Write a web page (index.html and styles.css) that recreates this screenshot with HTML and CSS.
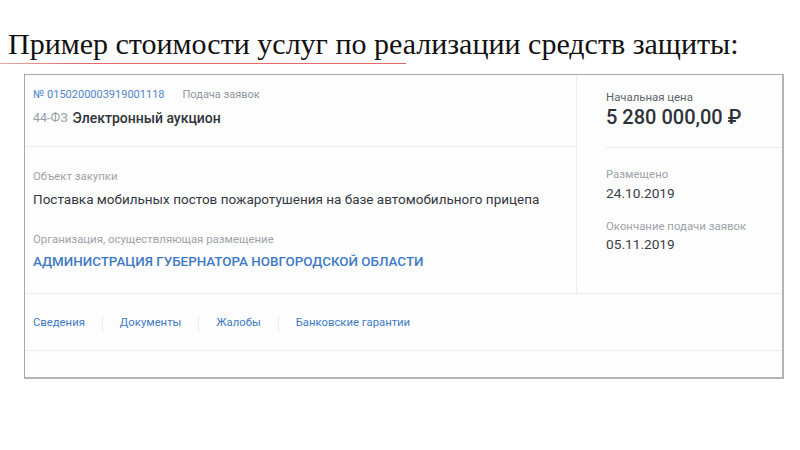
FILE: index.html
```html
<!DOCTYPE html>
<html lang="ru">
<head>
<meta charset="utf-8">
<title>Пример стоимости услуг</title>
<link rel="stylesheet" href="styles.css">
</head>
<body>
<h1 class="title">Пример стоимости услуг по реализации средств защиты:</h1>
<div class="rule"></div>
<div class="card">
  <div class="card-top">
    <div class="main">
      <div class="head">
        <div class="meta"><span class="num">№ 0150200003919001118</span><span class="stage">Подача заявок</span></div>
        <div class="kind"><span class="law">44-ФЗ</span><span class="type">Электронный аукцион</span></div>
      </div>
      <div class="body">
        <div class="label">Объект закупки</div>
        <div class="subject">Поставка мобильных постов пожаротушения на базе автомобильного прицепа</div>
        <div class="label label-org">Организация, осуществляющая размещение</div>
        <div class="org">АДМИНИСТРАЦИЯ ГУБЕРНАТОРА НОВГОРОДСКОЙ ОБЛАСТИ</div>
      </div>
    </div>
    <div class="side">
      <div class="price-block">
        <div class="label">Начальная цена</div>
        <div class="price">5 280 000,00 ₽</div>
      </div>
      <div class="dates">
        <div class="label">Размещено</div>
        <div class="date">24.10.2019</div>
        <div class="label label-end">Окончание подачи заявок</div>
        <div class="date">05.11.2019</div>
      </div>
    </div>
  </div>
  <div class="tabs">
    <span class="tab">Сведения</span>
    <span class="sep"></span>
    <span class="tab">Документы</span>
    <span class="sep"></span>
    <span class="tab">Жалобы</span>
    <span class="sep"></span>
    <span class="tab">Банковские гарантии</span>
  </div>
  <div class="footer"></div>
</div>
</body>
</html>
```

FILE: styles.css
```css
* { box-sizing: border-box; }

body {
  margin: 0;
  background: #ffffff;
  font-family: Roboto, "Noto Sans", sans-serif;
}

.title {
  margin: 0;
  padding: 28px 0 0 8px;
  height: 63px;
  font-family: "Liberation Serif", "Times New Roman", serif;
  font-weight: normal;
  font-size: 30px;
  line-height: 32px;
  color: #111111;
}

.rule {
  width: 406px;
  height: 1px;
  background: linear-gradient(to right, #f0a8a8, #e06a6a 20%, #e06a6a);
  margin-bottom: 10px;
}

.card {
  margin-left: 24px;
  width: 760px;
  height: 305px;
  border: 1px solid #a9a9a9;
  border-right-width: 2px;
  border-bottom-width: 2px;
  border-right-color: #b4b4b4;
  border-bottom-color: #b4b4b4;
  background: #fdfdfd;
  display: flex;
  flex-direction: column;
}

.card-top {
  display: grid;
  grid-template-columns: 552px 1fr;
  height: 219px;
  border-bottom: 1px solid #ececec;
}

.main {
  border-right: 1px solid #ececec;
  display: flex;
  flex-direction: column;
}

.head {
  height: 72px;
  padding: 13px 0 0 8px;
  border-bottom: 1px solid #ececec;
}

.meta {
  display: flex;
  gap: 18px;
  font-size: 11px;
  line-height: 14px;
}

.num { color: #4f86cc; }
.stage { color: #8f959d; }

.kind {
  margin-top: 8px;
  display: flex;
  gap: 5px;
  font-size: 12.5px;
  line-height: 16px;
}

.law { color: #9aa0a8; }
.type { color: #2f343b; font-weight: 500; font-size: 14px; }

.body {
  padding: 22px 0 0 8px;
}

.label {
  font-size: 11.4px;
  line-height: 14px;
  color: #9ea3aa;
}

.subject {
  margin-top: 7px;
  font-size: 13.5px;
  line-height: 18px;
  color: #33383f;
}

.label-org { margin-top: 24px; }

.org {
  margin-top: 7px;
  font-size: 13.4px;
  line-height: 18px;
  color: #3d7ac6;
  font-weight: 500;
}

.side {
  display: flex;
  flex-direction: column;
  padding-left: 29px;
}

.price-block {
  height: 73px;
  padding-top: 15px;
  border-bottom: 1px solid #ececec;
}

.price-block .label { color: #5e646c; }

.price {
  margin-top: 2px;
  font-size: 20px;
  line-height: 22px;
  color: #2e3239;
  font-weight: 500;
}

.dates { padding-top: 19px; }

.date {
  margin-top: 4px;
  font-size: 13.7px;
  line-height: 16px;
  color: #3a3f46;
}

.label-end { margin-top: 18px; }
.label-end + .date { margin-top: 3px; }

.tabs {
  height: 57px;
  border-bottom: 1px solid #ececec;
  display: flex;
  align-items: center;
  padding: 2px 0 0 8px;
  gap: 17px;
}

.tab {
  font-size: 11.3px;
  line-height: 14px;
  color: #3f7bc5;
}

.sep {
  width: 1px;
  height: 17px;
  background: #ececec;
}

.footer { flex: 1; }
```
